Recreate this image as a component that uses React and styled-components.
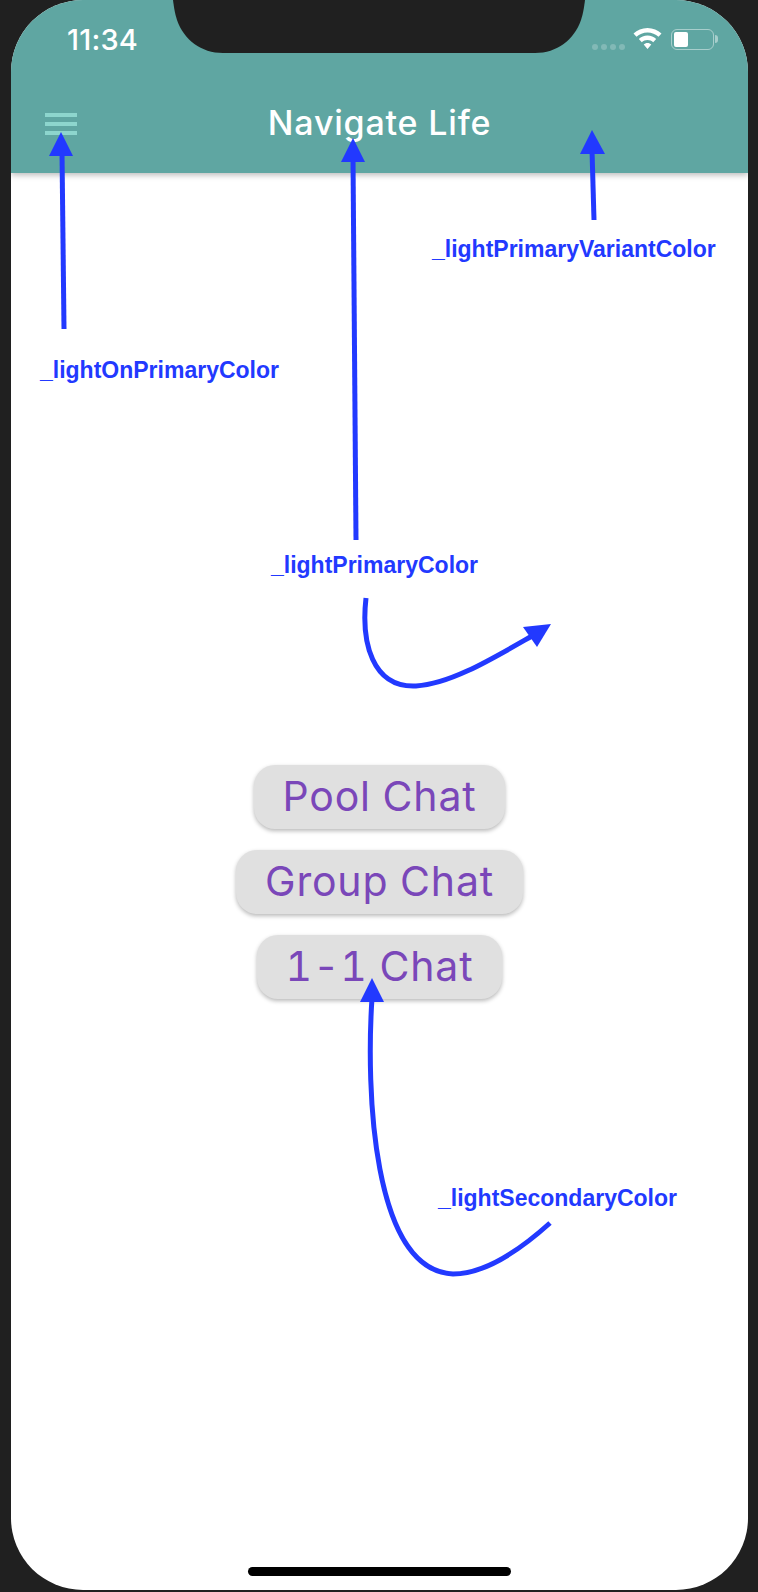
import React from 'react';
import styled, { createGlobalStyle } from 'styled-components';

const ARROW_BLUE = '#2239ff';

const GlobalStyle = createGlobalStyle`
  html, body {
    margin: 0;
    padding: 0;
    background: #202020;
  }
`;

const Page = styled.div`
  position: relative;
  width: 758px;
  height: 1592px;
  padding: 0 10px 2px 11px;
  box-sizing: border-box;
  display: flex;
  font-family: Inter, "Liberation Sans", sans-serif;
  overflow: hidden;
`;

const Screen = styled.div`
  flex: 1;
  display: flex;
  flex-direction: column;
  background: #fff;
  border-radius: 72px;
  overflow: hidden;
`;

const Header = styled.header`
  height: 173px;
  flex-shrink: 0;
  display: flex;
  flex-direction: column;
  background: #5fa6a2;
  box-shadow: 0 2px 6px rgba(0, 0, 0, 0.28);
  z-index: 1;
`;

const StatusBar = styled.div`
  height: 80px;
  display: flex;
  align-items: center;
  justify-content: space-between;
  padding: 0 34px 2px 56px;
  box-sizing: border-box;
  color: #fff;
`;

const Time = styled.span`
  font-size: 29px;
  font-weight: 500;
  letter-spacing: 0.2px;
`;

const StatusIcons = styled.div`
  display: flex;
  align-items: center;
  gap: 8px;
`;

const Signal = styled.div`
  display: flex;
  gap: 3px;
  margin-top: 16px;
`;

const SignalDot = styled.i`
  width: 6px;
  height: 6px;
  border-radius: 50%;
  background: rgba(255, 255, 255, 0.22);
`;

const Battery = styled.div`
  position: relative;
  width: 43px;
  height: 21px;
  padding: 2px;
  margin-left: 1px;
  box-sizing: border-box;
  border: 1.5px solid rgba(255, 255, 255, 0.45);
  border-radius: 6px;

  &::after {
    content: '';
    position: absolute;
    right: -5px;
    top: 5px;
    width: 3px;
    height: 8px;
    border-radius: 0 3px 3px 0;
    background: rgba(255, 255, 255, 0.45);
  }
`;

const BatteryLevel = styled.div`
  width: 14px;
  height: 100%;
  background: #fff;
  border-radius: 2px;
`;

const TitleRow = styled.div`
  position: relative;
  display: flex;
  justify-content: center;
  padding-top: 21px;
`;

const MenuIcon = styled.div`
  position: absolute;
  left: 34px;
  top: 33px;
  width: 32px;
  display: flex;
  flex-direction: column;
  gap: 5px;
`;

const MenuBar = styled.i`
  height: 4px;
  background: #8dd5cd;
`;

const Title = styled.h1`
  margin: 0;
  font-size: 34px;
  line-height: 44px;
  font-weight: 500;
  letter-spacing: 0.8px;
  color: #fff;
`;

const Body = styled.main`
  flex: 1;
  display: flex;
  flex-direction: column;
  align-items: center;
  justify-content: center;
  gap: 21px;
`;

const ChatButton = styled.button`
  height: 64px;
  padding: 0 29px 2px;
  border: 0;
  border-radius: 21px;
  background: #e0e0e0;
  box-shadow: 0 2px 4px rgba(0, 0, 0, 0.28);
  color: #7a47b9;
  font-family: inherit;
  font-size: 41px;
  font-weight: 400;
  font-variant-numeric: tabular-nums;
  letter-spacing: 0.8px;
`;

const Notch = styled.svg`
  position: absolute;
  left: 173px;
  top: 0;
  z-index: 2;
`;

const HomeBar = styled.div`
  position: absolute;
  left: 248px;
  top: 1567px;
  width: 263px;
  height: 9px;
  border-radius: 5px;
  background: #000;
  z-index: 2;
`;

const Overlay = styled.svg`
  position: absolute;
  left: 0;
  top: 0;
  z-index: 3;
  pointer-events: none;
`;

const Note = styled.span`
  position: absolute;
  left: ${(p) => p.$x}px;
  top: ${(p) => p.$y}px;
  z-index: 3;
  font-family: "Liberation Sans", Arial, sans-serif;
  font-size: 23px;
  line-height: 26px;
  font-weight: 700;
  color: ${ARROW_BLUE};
  white-space: nowrap;
`;

const notes = [
  { text: '_lightPrimaryVariantColor', x: 432, y: 236 },
  { text: '_lightOnPrimaryColor', x: 40, y: 357 },
  { text: '_lightPrimaryColor', x: 271, y: 552 },
  { text: '_lightSecondaryColor', x: 438, y: 1185 },
];

function Wifi() {
  return (
    <svg width="29" height="22" viewBox="0 0 29 22">
      <path d="M14.5 0C9 0 4.2 2.2.5 5.6l3 3.2C6.4 6.100 10.200 4.500 14.500 4.500s8.100 1.600 11 4.300l3-3.200C24.800 2.200 20 0 14.500 0z" fill="#fff" />
      <path d="M14.500 7.500c-3.400 0-6.400 1.300-8.700 3.500l3 3.200c1.500-1.400 3.500-2.200 5.700-2.200s4.200.8 5.700 2.200l3-3.200c-2.300-2.200-5.300-3.500-8.700-3.500z" fill="#fff" />
      <path d="M14.500 15c-1.500 0-2.800.6-3.800 1.500l3.800 4.500 3.800-4.500c-1-.9-2.300-1.500-3.800-1.500z" fill="#fff" />
    </svg>
  );
}

function Arrows() {
  return (
    <Overlay width="758" height="1592" viewBox="0 0 758 1592" fill="none" stroke={ARROW_BLUE} strokeWidth="5">
      <path d="M64 329L62 152" />
      <path d="M61 132L73 156H49Z" fill={ARROW_BLUE} stroke="none" />
      <path d="M356 540L353 158" />
      <path d="M353 138L365 162H341Z" fill={ARROW_BLUE} stroke="none" />
      <path d="M594 220L592 150" />
      <path d="M592 130L605 154H580Z" fill={ARROW_BLUE} stroke="none" />
      <path d="M366 598C361 642 372 688 416 686C450 684 490 660 532 636" />
      <path d="M551 624L523 627L537 647Z" fill={ARROW_BLUE} stroke="none" />
      <path d="M372 998C366 1090 372 1270 453 1274C485 1274 520 1250 550 1223" />
      <path d="M372 978L384 1002H360Z" fill={ARROW_BLUE} stroke="none" />
    </Overlay>
  );
}

function App() {
  return (
    <Page>
      <GlobalStyle />
      <Screen>
        <Header>
          <StatusBar>
            <Time>11:34</Time>
            <StatusIcons>
              <Signal>
                <SignalDot />
                <SignalDot />
                <SignalDot />
                <SignalDot />
              </Signal>
              <Wifi />
              <Battery>
                <BatteryLevel />
              </Battery>
            </StatusIcons>
          </StatusBar>
          <TitleRow>
            <MenuIcon>
              <MenuBar />
              <MenuBar />
              <MenuBar />
            </MenuIcon>
            <Title>Navigate Life</Title>
          </TitleRow>
        </Header>
        <Body>
          <ChatButton>Pool Chat</ChatButton>
          <ChatButton>Group Chat</ChatButton>
          <ChatButton>1-1 Chat</ChatButton>
        </Body>
      </Screen>
      <Notch width="412" height="53" viewBox="0 0 412 53">
        <path d="M0 0C1 8 2 14 4 20C11 40 28 53 50 53H362C384 53 401 40 408 20C410 14 411 8 412 0Z" fill="#202020" />
      </Notch>
      <HomeBar />
      <Arrows />
      {notes.map((n) => (
        <Note key={n.text} $x={n.x} $y={n.y}>{n.text}</Note>
      ))}
    </Page>
  );
}

export default App;
